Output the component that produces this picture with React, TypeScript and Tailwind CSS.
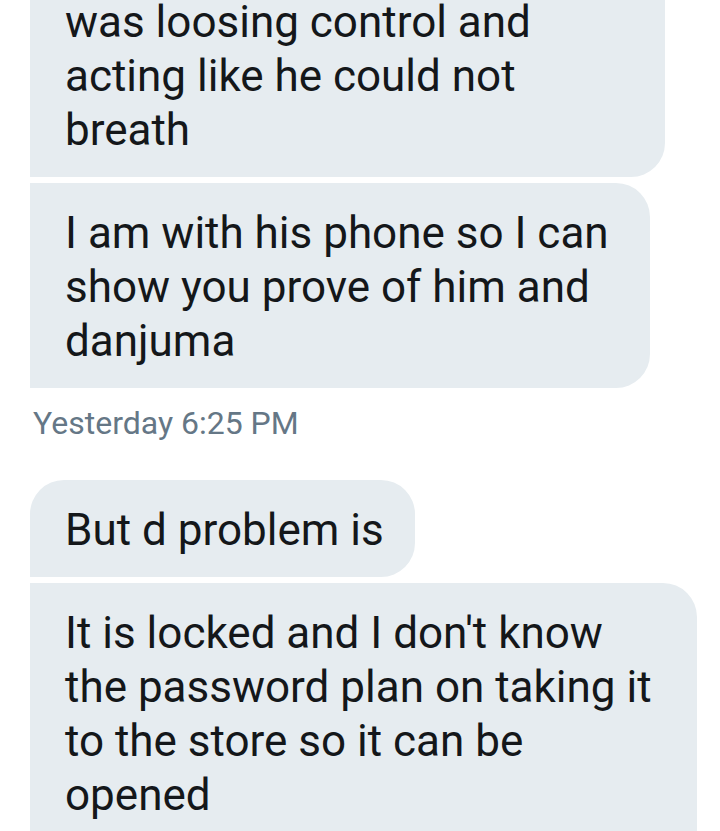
const font = { fontFamily: "Roboto, 'Liberation Sans', sans-serif" }

const Bubble = ({ lines, className }: { lines: string[]; className: string }) => (
  <div className={`bg-[#e6ecf0] pl-[35px] pr-[20px] pt-[23px] pb-[20px] text-[44px] leading-[54px] text-[#14171a] ${className}`}>
    {lines.map((l, i) => (
      <div key={i} className="whitespace-nowrap">{l}</div>
    ))}
  </div>
)

export default function App() {
  return (
    <div className="w-[720px] h-[831px] overflow-hidden bg-white" style={font}>
      <div className="flex flex-col items-start pl-[30px] -mt-[28px]">
        <Bubble
          className="w-[635px] rounded-br-[34px]"
          lines={["was loosing control and", "acting like he could not", "breath"]}
        />
        <Bubble
          className="w-[620px] mt-[6px] rounded-tr-[34px] rounded-br-[34px]"
          lines={["I am with his phone so I can", "show you prove of him and", "danjuma"]}
        />
        <div className="mt-[16px] ml-[3px] text-[32px] leading-[38px] text-[#657786]">Yesterday 6:25 PM</div>
        <Bubble
          className="w-[385px] mt-[38px] rounded-tl-[34px] rounded-tr-[34px] rounded-br-[34px]"
          lines={["But d problem is"]}
        />
        <Bubble
          className="w-[667px] mt-[6px] rounded-tr-[34px] pb-[40px]"
          lines={["It is locked and I don't know", "the password plan on taking it", "to the store so it can be", "opened"]}
        />
      </div>
    </div>
  )
}
